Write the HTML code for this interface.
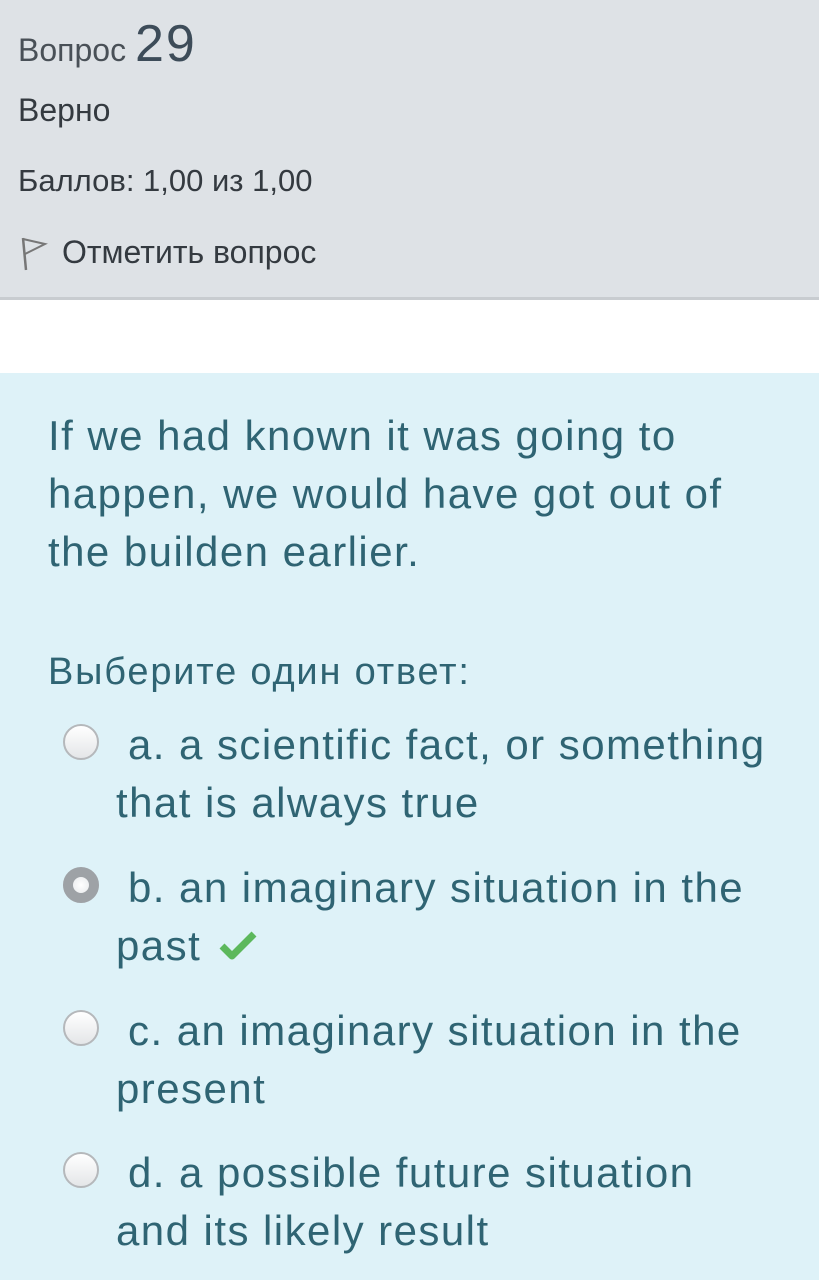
<!DOCTYPE html>
<html><head><meta charset="utf-8"><style>
body{margin:0;width:819px;height:1280px;overflow:hidden;background:#fff;font-family:"Liberation Sans",sans-serif;}
.hdr{position:absolute;left:0;top:0;width:819px;height:297px;background:#dee2e6;border-bottom:3px solid #c8ccd0;color:#343a40;}
.hdr div{position:absolute;left:18px;font-size:32px;white-space:nowrap;}
.q{position:absolute;left:0;top:373px;width:819px;height:907px;background:#def2f8;color:#2f6473;}
.t{position:absolute;left:48px;font-size:42px;line-height:58px;white-space:nowrap;letter-spacing:1.45px;}
.r{position:absolute;left:63px;width:36px;height:36px;border-radius:50%;box-sizing:border-box;border:2px solid #b5b8bb;background:linear-gradient(#fff,#e4e6e8);}
</style></head><body>
<div class="hdr">
<div style="top:14px;color:#495057"><span style="font-size:32px">Вопрос</span> <span style="font-size:52px;color:#3d4c59;letter-spacing:2px">29</span></div>
<div style="top:92px">Верно</div>
<div style="top:163px;font-size:31px">Баллов: 1,00 из 1,00</div>
<div style="top:234px;left:62px">Отметить вопрос</div>
<svg style="position:absolute;left:20px;top:236px" width="28" height="36" viewBox="0 0 28 36"><path d="M3 2 L6 34" stroke="#777" stroke-width="2.5" fill="none"/><path d="M3 3 L25 8 L5 18" stroke="#777" stroke-width="2" fill="none"/></svg>
</div>
<div class="q">
<div class="t" style="top:34px">If we had known it was going to</div>
<div class="t" style="top:92px">happen, we would have got out of</div>
<div class="t" style="top:150px">the builden earlier.</div>
<div class="t" style="top:270px;font-size:38px;letter-spacing:1.8px">Выберите один ответ:</div>
<div class="r" style="top:351px"></div>
<div class="t" style="top:343px;left:128px">a. a scientific fact, or something</div>
<div class="t" style="top:401px;left:116px">that is always true</div>
<div class="r" style="top:494px;border:10px solid #9ea2a6;background:radial-gradient(#fff,#e8eaec)"></div>
<div class="t" style="top:486px;left:128px">b. an imaginary situation in the</div>
<div class="t" style="top:544px;left:116px">past</div>
<svg style="position:absolute;left:218px;top:557px" width="40" height="32" viewBox="0 0 40 32"><path d="M4 16 L14 26 L36 4" stroke="#5cb85c" stroke-width="7" fill="none" stroke-linejoin="round"/></svg>
<div class="r" style="top:637px"></div>
<div class="t" style="top:629px;left:128px">c. an imaginary situation in the</div>
<div class="t" style="top:687px;left:116px">present</div>
<div class="r" style="top:779px"></div>
<div class="t" style="top:771px;left:128px">d. a possible future situation</div>
<div class="t" style="top:829px;left:116px">and its likely result</div>
</div>
</body></html>
